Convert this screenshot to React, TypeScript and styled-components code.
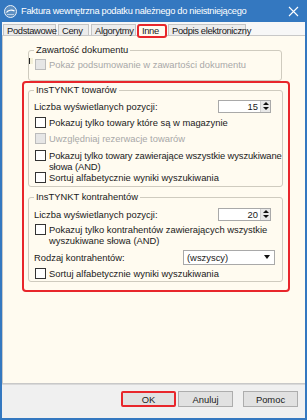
import React from "react";
import styled, { createGlobalStyle } from "styled-components";

const GlobalStyle = createGlobalStyle`
  html, body {
    margin: 0;
    padding: 0;
    background: #ffffff;
  }
  body {
    font-family: "Liberation Sans", Arial, sans-serif;
    font-size: 9.4px;
    color: #1a1a1a;
  }
`;

const Window = styled.div`
  width: 307px;
  height: 420px;
  box-sizing: border-box;
  border: 2px solid #3478c0;
  border-top: 0;
  display: flex;
  flex-direction: column;
  background: #f0f0f0;
  overflow: hidden;
`;

const TitleBar = styled.div`
  height: 22px;
  flex: none;
  margin: 0 -2px;
  background: #3478c0;
  color: #ffffff;
  display: flex;
  align-items: center;
  padding: 0 8px 0 4px;
  font-size: 9.3px;
  letter-spacing: -0.3px;
`;

const TitleText = styled.div`
  flex: 1;
  margin-left: 4px;
  white-space: nowrap;
`;

const TabStrip = styled.div`
  height: 13px;
  flex: none;
  display: flex;
  align-items: flex-end;
  padding-left: 1px;
  background: #f7f7f7;
  letter-spacing: -0.35px;
  border-bottom: 1px solid #c8c8c8;
`;

const Tab = styled.div<{ active?: boolean; width: number }>`
  width: ${(p) => p.width}px;
  height: ${(p) => (p.active ? 12 : 11)}px;
  box-sizing: border-box;
  margin-right: 2px;
  margin-bottom: ${(p) => (p.active ? -1 : 0)}px;
  border: 1px solid #c4c4c4;
  border-bottom: 0;
  background: ${(p) => (p.active ? "#fffbf0" : "#ececec")};
  display: flex;
  align-items: center;
  padding-left: 3px;
  white-space: nowrap;
  position: relative;
  ${(p) =>
    p.active &&
    `
    &::after {
      content: "";
      position: absolute;
      left: -2px;
      right: -2px;
      top: -1px;
      bottom: -2px;
      border: 2px solid #e8262b;
      border-radius: 3px;
    }
  `}
`;

const Panel = styled.div`
  flex: 1;
  background: #fffbf0;
  border-left: 1px solid #c8c8c8;
  border-bottom: 1px solid #c8c8c8;
  padding: 8px 23px 0 25px;
  display: flex;
  flex-direction: column;
`;

const Group = styled.fieldset<{ bottom?: number }>`
  margin: 0;
  padding: 0 5px ${(p) => p.bottom ?? 3}px 5px;
  border: 1px solid #cfcbbf;
  border-radius: 3px;
  min-width: 0;
`;

const Legend = styled.legend`
  padding: 0 2px;
  line-height: 12px;
  font-size: 9.4px;
`;

const Highlight = styled.div`
  margin: 0 -8px 0 -6px;
  padding: 1px 5px 8px 4px;
  border: 2px solid #e8262b;
  border-radius: 4px;
  display: flex;
  flex-direction: column;
  gap: 4px;
`;

const Row = styled.div<{ h: number; top?: number }>`
  height: ${(p) => p.h}px;
  margin-top: ${(p) => p.top ?? 0}px;
  display: flex;
  align-items: center;
  white-space: nowrap;
`;

const CheckRow = styled.div<{ h: number; top?: number; disabled?: boolean }>`
  height: ${(p) => p.h}px;
  box-sizing: border-box;
  padding-top: ${(p) => p.top ?? 0}px;
  display: flex;
  align-items: ${(p) => (p.top ? "flex-start" : "center")};
  color: ${(p) => (p.disabled ? "#a8a8a8" : "#1a1a1a")};
  line-height: 11px;
  white-space: nowrap;
`;

const Box = styled.span<{ disabled?: boolean }>`
  width: 9px;
  height: 9px;
  flex: none;
  border: 1px solid ${(p) => (p.disabled ? "#bcbcbc" : "#333333")};
  background: ${(p) => (p.disabled ? "#e6e6e6" : "#ffffff")};
  margin: 0 3px 0 1px;
`;

const Marker = styled.span`
  width: 3px;
  height: 6px;
  flex: none;
  margin-left: -5px;
  margin-right: 1px;
  align-self: flex-start;
  margin-top: 2px;
  background: #f3efd8;
  border-left: 1px solid #222;
`;

const Label = styled.div`
  flex: 1;
`;

const LongLabel = styled.div`
  flex: 1;
  letter-spacing: -0.1px;
`;

const Spin = styled.div`
  width: 53px;
  height: 13px;
  box-sizing: border-box;
  border: 1px solid #a9a9a9;
  background: #ffffff;
  display: flex;
  margin-right: 6px;
`;

const SpinValue = styled.div`
  flex: 1;
  text-align: right;
  padding-right: 2px;
  line-height: 11px;
`;

const SpinButtons = styled.div`
  width: 9px;
  display: flex;
  flex-direction: column;
  background: #e8e8e8;
  border-left: 1px solid #cfcfcf;
`;

const Arrow = styled.div<{ down?: boolean }>`
  flex: 1;
  display: flex;
  align-items: center;
  justify-content: center;
  &::before {
    content: "";
    border-left: 3px solid transparent;
    border-right: 3px solid transparent;
    ${(p) =>
      p.down ? "border-top: 3px solid #111;" : "border-bottom: 3px solid #111;"}
  }
`;

const Select = styled.div`
  width: 92px;
  height: 15px;
  box-sizing: border-box;
  border: 1px solid #a9a9a9;
  background: #ffffff;
  display: flex;
  align-items: center;
  padding: 0 4px 0 3px;
  margin-right: 2px;
  justify-content: space-between;
  &::after {
    content: "";
    border-left: 3.5px solid transparent;
    border-right: 3.5px solid transparent;
    border-top: 4px solid #111;
  }
`;

const Footer = styled.div`
  height: 27px;
  flex: none;
  display: flex;
  align-items: flex-start;
  justify-content: flex-end;
  padding: 6px 7px 0 0;
  border-top: 1px solid #d9d9d9;
`;

const Button = styled.div<{ focused?: boolean; gap: number }>`
  width: 55px;
  height: 16px;
  box-sizing: border-box;
  margin-left: ${(p) => p.gap}px;
  border: ${(p) => (p.focused ? "2px solid #e8262b" : "1px solid #adadad")};
  border-radius: ${(p) => (p.focused ? 2 : 0)}px;
  background: #e1e1e1;
  display: flex;
  align-items: center;
  justify-content: center;
`;

const Logo = () => (
  <svg width="13" height="13" viewBox="0 0 13 13">
    <circle cx="6.5" cy="6.5" r="6" fill="#5d8fc2" stroke="#e8f0f8" strokeWidth="1" />
    <path d="M2.5 7.5 C4 5, 8 4.5, 10.5 6" stroke="#ffffff" strokeWidth="1.2" fill="none" />
    <path d="M3 9.5 L10 9.5" stroke="#cfe0f0" strokeWidth="0.8" />
  </svg>
);

const CloseIcon = () => (
  <svg width="11" height="11" viewBox="0 0 11 11">
    <path d="M1 1 L10 10 M10 1 L1 10" stroke="#ffffff" strokeWidth="1.1" />
  </svg>
);

const SpinBox: React.FC<{ value: number }> = ({ value }) => (
  <Spin>
    <SpinValue>{value}</SpinValue>
    <SpinButtons>
      <Arrow />
      <Arrow down />
    </SpinButtons>
  </Spin>
);

const tabs = [
  { label: "Podstawowe", width: 53 },
  { label: "Ceny", width: 31 },
  { label: "Algorytmy", width: 45 },
  { label: "Inne", width: 28, active: true },
  { label: "Podpis elektroniczny", width: 78 },
];

export default function App() {
  return (
    <>
      <GlobalStyle />
      <Window>
        <TitleBar>
          <Logo />
          <TitleText>Faktura wewnętrzna podatku należnego do nieistniejącego</TitleText>
          <CloseIcon />
        </TitleBar>
        <TabStrip>
          {tabs.map((t) => (
            <Tab key={t.label} width={t.width} active={t.active}>
              {t.label}
            </Tab>
          ))}
        </TabStrip>
        <Panel>
          <Group bottom={8}>
            <Legend>Zawartość dokumentu</Legend>
            <CheckRow h={16} disabled>
              <Marker />
              <Box disabled />
              <Label>Pokaż podsumowanie w zawartości dokumentu</Label>
            </CheckRow>
          </Group>
          <Highlight>
            <Group>
              <Legend>InsTYNKT towarów</Legend>
              <Row h={16} top={2}>
                <Label>Liczba wyświetlanych pozycji:</Label>
                <SpinBox value={15} />
              </Row>
              <CheckRow h={16}>
                <Box />
                <Label>Pokazuj tylko towary które są w magazynie</Label>
              </CheckRow>
              <CheckRow h={16} disabled>
                <Box disabled />
                <Label>Uwzględniaj rezerwacje towarów</Label>
              </CheckRow>
              <CheckRow h={26} top={4}>
                <Box />
                <LongLabel>
                  Pokazuj tylko towary zawierające wszystkie wyszukiwane
                  <br />
                  słowa (AND)
                </LongLabel>
              </CheckRow>
              <CheckRow h={11}>
                <Box />
                <Label>Sortuj alfabetycznie wyniki wyszukiwania</Label>
              </CheckRow>
            </Group>
            <Group>
              <Legend>InsTYNKT kontrahentów</Legend>
              <Row h={16} top={3}>
                <Label>Liczba wyświetlanych pozycji:</Label>
                <SpinBox value={20} />
              </Row>
              <CheckRow h={24} top={2}>
                <Box />
                <Label>
                  Pokazuj tylko kontrahentów zawierających wszystkie
                  <br />
                  wyszukiwane słowa (AND)
                </Label>
              </CheckRow>
              <Row h={22}>
                <Label>Rodzaj kontrahentów:</Label>
                <Select>(wszyscy)</Select>
              </Row>
              <CheckRow h={10}>
                <Box />
                <Label>Sortuj alfabetycznie wyniki wyszukiwania</Label>
              </CheckRow>
            </Group>
          </Highlight>
        </Panel>
        <Footer>
          <Button focused gap={0}>OK</Button>
          <Button gap={2}>Anuluj</Button>
          <Button gap={10}>Pomoc</Button>
        </Footer>
      </Window>
    </>
  );
}
